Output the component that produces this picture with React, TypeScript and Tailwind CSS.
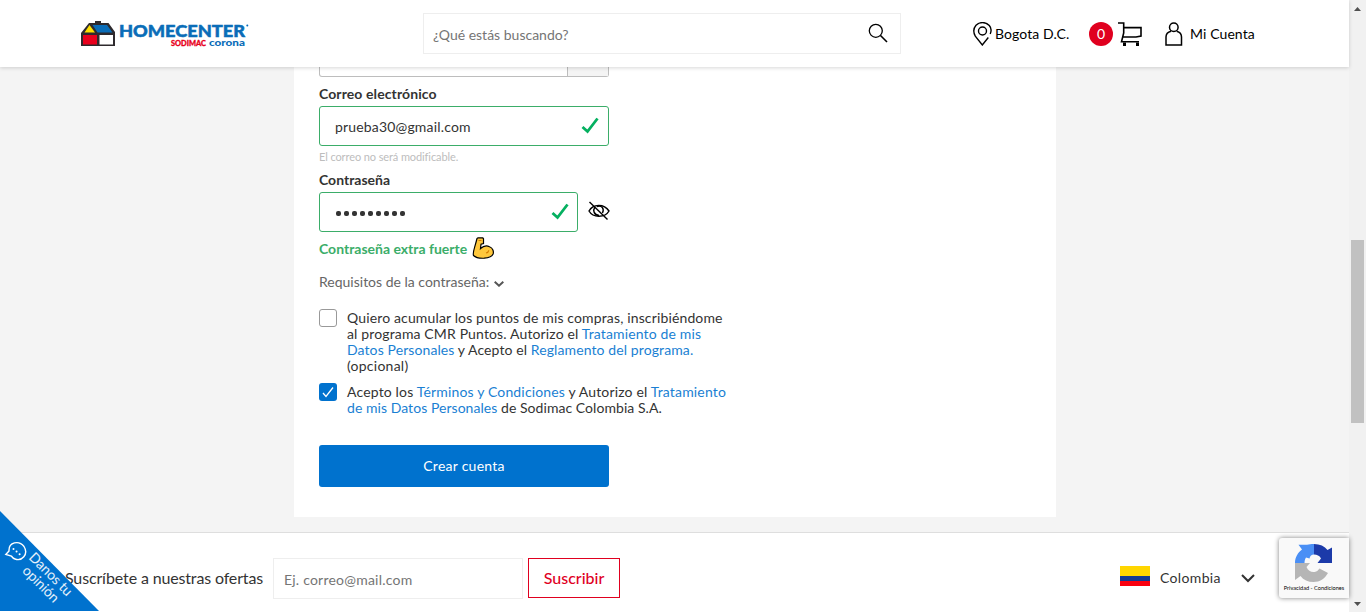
import React from "react";

function HomeLogo() {
  return (
    <div className="flex w-[168px] items-start gap-[3px]">
      <svg width="35" height="26" viewBox="0 0 35 26" className="shrink-0">
        <path d="M8 2h6V0h6v2h7.500L34 11v14H0V12z" fill="#2e2a2d" />
        <path d="M8.500 4L3.500 11.500H14z" fill="#ffe000" />
        <path d="M11.500 4H26l5.500 7.500H16.500z" fill="#0a6db8" />
        <path d="M2 14h14v9.500H2z" fill="#e8001c" />
        <path d="M18.500 14H32v9.500H18.500z" fill="#fff" />
      </svg>
      <div className="flex flex-col items-end pt-[2px]">
        <svg width="130" height="24" viewBox="0 0 130 24" className="overflow-visible">
          <text x="0" y="13.500" textLength="126" lengthAdjust="spacingAndGlyphs" fontFamily="Lato" fontWeight="900" fontSize="16.500" fill="#0a6db8" stroke="#0a6db8" strokeWidth=".5">HOMECENTER</text>
          <circle cx="128.300" cy="2.500" r="1" fill="#0a6db8" />
          <text x="52" y="22.800" textLength="35" lengthAdjust="spacingAndGlyphs" fontFamily="Lato" fontWeight="900" fontSize="7.500" fill="#e8001c" stroke="#e8001c" strokeWidth=".3">SODIMAC</text>
          <text x="90" y="22.800" textLength="36" lengthAdjust="spacingAndGlyphs" fontFamily="Lato" fontWeight="900" fontSize="8.500" fill="#0a6db8">corona</text>
        </svg>
      </div>
    </div>
  );
}

function Check() {
  return (
    <svg width="18" height="17" viewBox="0 0 18 17" fill="none" className="-mt-[1px] shrink-0">
      <path d="M1.500 10L6.500 14.500L16.500 1.500" stroke="#05b060" strokeWidth="2.800" />
    </svg>
  );
}

function Arm() {
  return (
    <svg width="22" height="22" viewBox="0 0 22 22" className="shrink-0">
      <path d="M5 1.500L6 .8h4.800l.7 1v4.700L9 7.200l-.5 4.500c3-3 6.500-3.200 9-2 3.700 1.300 4.200 5 3.700 7-1 2.500-5 4.200-9 4.500-4 .2-8.500-.5-10.700-2.700C.3 15.500 3 10 5 1.500z" fill="#ffc83d" stroke="#000" strokeWidth="1.200" />
      <path d="M6.500 3.500h3M14 16c1.500-.3 2.500-1.300 2.800-2.700" fill="none" stroke="#d67d00" strokeWidth="1.200" />
    </svg>
  );
}

function Scrollbar() {
  return (
    <div className="flex w-[17px] shrink-0 flex-col items-center justify-between bg-[#f1f1f1] pt-[7px] pb-[6px]">
      <svg width="7" height="4" viewBox="0 0 7 4"><path d="M0 4L3.500 0L7 4z" fill="#505050" /></svg>
      <div className="mt-[50px] h-[183px] w-[13px] bg-[#c1c1c1]" />
      <svg width="7" height="4" viewBox="0 0 7 4"><path d="M0 0L3.500 4L7 0z" fill="#505050" /></svg>
    </div>
  );
}

function Header() {
  return (
    <header className="relative z-10 flex h-[67px] shrink-0 items-center bg-white pl-[81px] text-black shadow-[0_1px_4px_rgba(0,0,0,0.16)]">
      <HomeLogo />
      <div className="ml-[174px] flex h-[41px] w-[478px] items-center justify-between border border-[#eeeeee] pr-[12px] pl-[9px]">
        <span className="pt-[2px] text-[14px] text-[#757575]">¿Qué estás buscando?</span>
        <svg width="20" height="20" viewBox="0 0 20 20" fill="none" stroke="#000" strokeWidth="1.300" className="-mt-[2px]">
          <circle cx="7.800" cy="7.800" r="6.500" /><path d="M12.500 12.500l6.500 6.500" strokeWidth="1.600" />
        </svg>
      </div>
      <div className="ml-[72px] flex items-center">
        <svg width="19" height="24" viewBox="0 0 19 24" fill="none" stroke="#000" strokeWidth="1.400">
          <path d="M17.200 12C18.500 9 18.300 5.800 16.300 3.500C12.500-.5 6.500-.2 3 3.200C.2 6.500.3 10.500 2.300 14.200L9.300 23L15.300 15.500" /><circle cx="9.500" cy="9" r="4" />
        </svg>
        <span className="ml-[3px] w-[74px] text-[14px] tracking-[0.1px] whitespace-nowrap">Bogota D.C.</span>
        <span className="ml-[20px] flex size-[24px] items-center justify-center rounded-full bg-[#e0001f] text-[14px] text-white">0</span>
        <svg width="24" height="24" viewBox="0 0 24 24" fill="none" stroke="#000" strokeWidth="1.600" className="ml-[5px]">
          <path d="M0 1h5.700v4.600H23v8.400l-5 1H4.500M5.700 1v10L3.500 19.700H21" /><path d="M5 20.500h3V24H5zM18 20.500h3V24h-3z" fill="#000" stroke="none" />
        </svg>
        <svg width="18" height="24" viewBox="0 0 18 24" fill="none" stroke="#000" strokeWidth="1.500" className="ml-[23px]">
          <circle cx="8.800" cy="5.200" r="4.300" /><path d="M6 9.200C2.800 10 1 12.500 1 15v8h15.500v-8c0-2.500-1.800-5-4.800-5.800" />
        </svg>
        <span className="ml-[7px] text-[14px] tracking-[0.1px] whitespace-nowrap">Mi Cuenta</span>
      </div>
    </header>
  );
}

function Form() {
  return (
    <main className="ml-[294px] h-[450px] w-[762px] shrink-0 bg-white pl-[25px] text-[14px] leading-[16px] text-[#333]">
      <div className="flex h-[10px] w-[290px] rounded-b-[3px] border border-t-0 border-[#bdbdbd]">
        <div className="flex-1" />
        <div className="w-[41px] border-l border-[#bdbdbd] bg-[#f4f4f4]" />
      </div>
      <div className="mt-[9px] h-[20px] font-bold tracking-[0.1px]">Correo electrónico</div>
      <div className="flex h-[40px] w-[290px] items-center justify-between rounded-[3px] border border-[#3bad69] pr-[9px] pl-[15px]">
        <span className="pt-[2px] tracking-[0.17px]">prueba30@gmail.com</span><Check />
      </div>
      <div className="mt-[3px] h-[16px] text-[11px] tracking-[-0.1px] text-[#bdbdbd]">El correo no será modificable.</div>
      <div className="mt-[7px] h-[20px] font-bold">Contraseña</div>
      <div className="flex items-center">
        <div className="flex h-[40px] w-[259px] items-center justify-between rounded-[3px] border border-[#3bad69] pr-[8px] pl-[16px]">
          <span className="flex gap-[3px] pt-[2px]">
            {Array.from({ length: 9 }, (_, i) => <i key={i} className="size-[5px] rounded-[2px] bg-[#333]" />)}
          </span>
          <Check />
        </div>
        <svg width="22" height="20" viewBox="0 0 22 20" fill="none" stroke="#000" strokeWidth="1.400" className="-mt-[3px] ml-[10px]">
          <path d="M1 10C5 2.800 16 2.500 21 10C17 17 5 17 1 10z" /><path d="M7 6C4.500 9.500 6 14 11 14.500M9 5.500C14 4 16.500 8 14.500 12" /><path d="M1.500 1l18 17.500" />
        </svg>
      </div>
      <div className="mt-[4px] flex h-[24px] items-center gap-[5px] font-bold text-[#3bad69]">
        <span className="pt-[2px]">Contraseña extra fuerte</span><Arm />
      </div>
      <div className="mt-[13px] flex h-[18px] items-center gap-[5px] text-[#666]">
        <span>Requisitos de la contraseña:</span>
        <svg width="10" height="6" viewBox="0 0 10 6" fill="none" className="mt-[3px]"><path d="M.7.800L5 4.700L9.300.8" stroke="#555" strokeWidth="2" /></svg>
      </div>
      <div className="mt-[19px] flex gap-[10px]">
        <span className="-mt-[1px] size-[18px] rounded-[3px] border border-[#999]" />
        <p className="tracking-[0.14px] whitespace-nowrap">
          Quiero acumular los puntos de mis compras, inscribiéndome<br />
          al programa CMR Puntos. Autorizo el <a className="text-[#1a7fd3]">Tratamiento de mis</a><br />
          <span className="tracking-[0.1px]"><a className="text-[#1a7fd3]">Datos Personales</a> y Acepto el <a className="text-[#1a7fd3]">Reglamento del programa.</a></span><br />
          <span className="tracking-[0.25px]">(opcional)</span>
        </p>
      </div>
      <div className="mt-[10px] flex gap-[10px]">
        <span className="-mt-[1px] flex size-[18px] items-center justify-center rounded-[3px] bg-[#0072ce]">
          <svg width="12" height="12" viewBox="0 0 12 12" fill="none"><path d="M1 7l3 3.500L11 1.500" stroke="#fff" strokeWidth="1.300" /></svg>
        </span>
        <p className="whitespace-nowrap">
          <span className="tracking-[0.16px]">Acepto los <a className="text-[#1a7fd3]">Términos y Condiciones</a> y Autorizo el <a className="text-[#1a7fd3]">Tratamiento</a></span><br />
          <span className="tracking-[0.05px]"><a className="text-[#1a7fd3]">de mis Datos Personales</a> de Sodimac Colombia S.A.</span>
        </p>
      </div>
      <button className="mt-[29px] block h-[42px] w-[290px] rounded-[3px] bg-[#0072ce] text-[14px] tracking-[0.25px] text-white">Crear cuenta</button>
    </main>
  );
}

function Footer() {
  return (
    <footer className="mt-[15px] flex flex-1 items-start border-t border-[#dedede] bg-white pt-[25px] pl-[65px] text-[#333]">
      <div className="mt-[8px] w-[208px] text-[16px] leading-[24px] tracking-[-0.15px] whitespace-nowrap">Suscríbete a nuestras ofertas</div>
      <div className="flex h-[41px] w-[250px] items-center border border-[#eeeeee] pt-[2px] pl-[10px] text-[14px] tracking-[0.22px] text-[#757575]">Ej. correo@mail.com</div>
      <button className="ml-[5px] h-[40px] w-[92px] border border-[#e0001f] text-[16px] font-medium text-[#e0001f]">Suscribir</button>
      <div className="mt-[8px] ml-[500px] flex items-start">
        <div className="flex h-[20px] w-[30px] flex-col"><i className="h-[10px] bg-[#ffd600]" /><i className="h-[5px] bg-[#123a93]" /><i className="h-[5px] bg-[#fa0010]" /></div>
        <span className="ml-[10px] w-[81px] pt-[2px] text-[14px] leading-[20px] tracking-[0.35px]">Colombia</span>
        <svg width="14" height="9" viewBox="0 0 14 9" fill="none" className="mt-[8px]"><path d="M1 1l6 6l6-6" stroke="#333" strokeWidth="2" /></svg>
      </div>
    </footer>
  );
}

function Opinion() {
  return (
    <div className="absolute top-[511px] left-0 z-20 h-[100px] w-[99px] overflow-hidden bg-[#0072ce] [clip-path:polygon(0_0,100%_100%,0_100%)]">
      <svg width="24" height="24" viewBox="0 0 24 24" fill="none" className="absolute top-[29px] left-[4px]">
        <path d="M1.800 14.500L5 11C4.500 2 15 0 20 6.500C25 14.500 17.500 21.500 11 19C9.500 18.500 8 17 7.300 16z" stroke="#fff" strokeWidth="1.400" />
        <path d="M9.500 9l6.500 5.500" stroke="#fff" strokeWidth="2" strokeLinecap="round" strokeDasharray="0 4" />
      </svg>
      <div className="absolute top-[54px] left-[11px] w-[70px] rotate-45 text-center text-[14px] leading-[14px] tracking-[-0.1px] text-white/90">Danos tu<br />opinión</div>
    </div>
  );
}

function Captcha() {
  return (
    <div className="absolute top-[538px] right-[17px] z-20 flex h-[60px] w-[70px] flex-col items-center overflow-hidden rounded-l-[3px] bg-[#f9f9f9] pt-[6px] shadow-[0_0_5px_gray]">
      <svg width="38" height="38" viewBox="0 0 38 38" className="shrink-0">
        <path d="M19 0v10.500C16.500 10.500 15 12 14.500 14.500L11 13.500C10 15 9.500 17 9.500 19H0C0 13 3 8.500 7 5.500L3.500 .8H12C14 .3 16 0 19 0z" fill="#4a8ff5" />
        <path d="M19 0c6 0 10.500 2 13.500 6L37 3.500V19H22.500L26 14.500C24.500 11.500 22 10.500 19 10.500z" fill="#1c3aa9" />
        <path d="M0 19H15L11.500 23C13 27 16.500 28.500 19.500 28C22 27.500 23.500 26 24.500 24.500L33 29C29.500 35 25 38 18.500 38C13 38 8.500 36 5.500 32L0 36z" fill="#b5b5b5" />
      </svg>
      <span className="mt-[1px] text-[5.600px] leading-[9px] whitespace-nowrap text-black">Privacidad - Condiciones</span>
    </div>
  );
}

export default function App() {
  return (
    <div className="relative flex h-[612px] w-[1366px] overflow-hidden font-['Lato',sans-serif]">
      <div className="flex w-[1349px] flex-col bg-[#f4f4f4]">
        <Header />
        <Form />
        <Footer />
      </div>
      <Scrollbar />
      <Opinion />
      <Captcha />
    </div>
  );
}
